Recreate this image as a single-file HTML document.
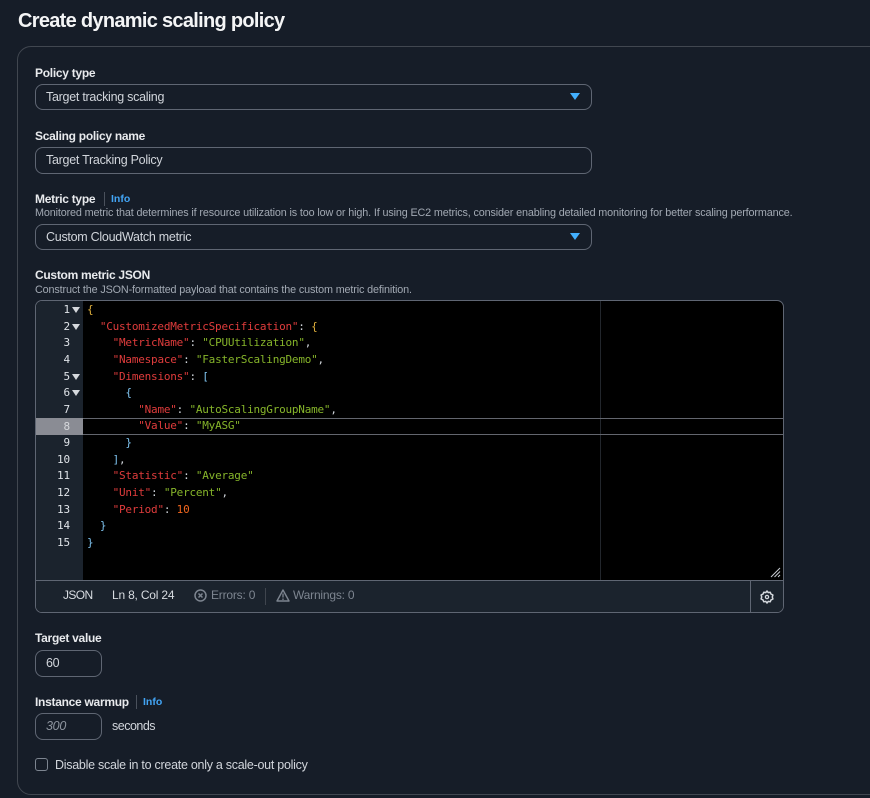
<!DOCTYPE html>
<html><head><meta charset="utf-8">
<style>
html,body{margin:0;padding:0;background:#161d28;}
body{width:870px;height:798px;position:relative;overflow:hidden;font-family:"Liberation Sans",sans-serif;color:#d1d5db;font-size:12.5px;letter-spacing:-.27px}
.a{position:absolute;white-space:nowrap}
.lbl{font-weight:700;font-size:12px;color:#e8eaed;line-height:16px;letter-spacing:-.28px}
.box{position:absolute;box-sizing:border-box;border:1px solid #5f6673;border-radius:8px;height:26px;line-height:24px;padding-left:10px;color:#d1d5db;font-size:12.5px}
.desc{font-size:10.8px;color:#a2a9b3;line-height:14px;letter-spacing:-.135px}
.info{font-weight:700;font-size:10.5px;color:#42a5f5;line-height:16px;letter-spacing:0}
.sep{position:absolute;width:1px;height:14px;background:#4a515c}
.tri{position:absolute;width:0;height:0;border-left:5px solid transparent;border-right:5px solid transparent;border-top:7px solid #42b0ff}
.code{position:absolute;left:87px;font-family:"DejaVu Sans Mono","Liberation Mono",monospace;font-size:11px;line-height:16.64px;white-space:pre;color:#cfd4da;letter-spacing:-.22px}
.k{color:#e03c3c}.s{color:#86b52a}.n{color:#f0661e}.y{color:#e0b03c}.b{color:#7fc4f0}
.ln{position:absolute;left:35px;width:35px;text-align:right;font-family:"DejaVu Sans Mono","Liberation Mono",monospace;font-size:11px;line-height:16.64px;color:#dfe3e8;letter-spacing:-.1px}
.fold{position:absolute;left:72px;width:0;height:0;border-left:4.5px solid transparent;border-right:4.5px solid transparent;border-top:6px solid #d5d8dc}
.st{font-size:12px;line-height:16px;letter-spacing:-.2px}
</style></head><body>
<div class="a" style="left:18px;top:7px;font-size:20px;font-weight:700;color:#f4f5f6;line-height:28px;letter-spacing:-.7px">Create dynamic scaling policy</div>
<div style="position:absolute;left:17px;top:46px;width:900px;height:749px;box-sizing:border-box;border:1px solid #414750;border-radius:14px"></div>

<div class="a lbl" style="left:35px;top:65px">Policy type</div>
<div class="box" style="left:35px;top:84px;width:557px">Target tracking scaling</div>
<div class="tri" style="left:570px;top:93px"></div>

<div class="a lbl" style="left:35px;top:128px">Scaling policy name</div>
<div class="box" style="left:35px;top:147px;width:557px;height:27px;line-height:25px">Target Tracking Policy</div>

<div class="a lbl" style="left:35px;top:191px">Metric type</div>
<div class="sep" style="left:104px;top:192px"></div>
<div class="a info" style="left:111px;top:191px">Info</div>
<div class="a desc" style="left:35px;top:206px">Monitored metric that determines if resource utilization is too low or high. If using EC2 metrics, consider enabling detailed monitoring for better scaling performance.</div>
<div class="box" style="left:35px;top:224px;width:557px">Custom CloudWatch metric</div>
<div class="tri" style="left:570px;top:233px"></div>

<div class="a lbl" style="left:35px;top:267px">Custom metric JSON</div>
<div class="a desc" style="left:35px;top:283px">Construct the JSON-formatted payload that contains the custom metric definition.</div>

<!-- editor -->
<div style="position:absolute;left:35px;top:300px;width:749px;height:313px;box-sizing:border-box;border:1px solid #5f6673;border-radius:7px;overflow:hidden;background:#000">
  <div style="position:absolute;left:0;top:0;width:47px;height:279px;background:#1b232d"></div>
  <div style="position:absolute;left:564px;top:0;width:1px;height:279px;background:#22262c"></div>
  <div style="position:absolute;left:0;top:117px;width:47px;height:17px;background:#8a8c94"></div>
  <div style="position:absolute;left:47px;top:117px;right:0;height:17px;box-sizing:border-box;border-top:1px solid #63666e;border-bottom:1px solid #63666e"></div>
  <div style="position:absolute;left:0;top:279px;right:0;bottom:0;background:#1b232d;border-top:1px solid #5f6673"></div>
  <div style="position:absolute;left:714px;top:279px;width:1px;bottom:0;background:#5f6673"></div>
</div>
<div class="ln" style="top:302px">1</div>
<div class="ln" style="top:318.6px">2</div>
<div class="ln" style="top:335.3px">3</div>
<div class="ln" style="top:351.9px">4</div>
<div class="ln" style="top:368.6px">5</div>
<div class="ln" style="top:385.2px">6</div>
<div class="ln" style="top:401.8px">7</div>
<div class="ln" style="top:418.5px;color:#d5d7db">8</div>
<div class="ln" style="top:435.1px">9</div>
<div class="ln" style="top:451.8px">10</div>
<div class="ln" style="top:468.4px">11</div>
<div class="ln" style="top:485px">12</div>
<div class="ln" style="top:501.7px">13</div>
<div class="ln" style="top:518.3px">14</div>
<div class="ln" style="top:535px">15</div>
<div class="fold" style="top:307px"></div>
<div class="fold" style="top:324px"></div>
<div class="fold" style="top:374px"></div>
<div class="fold" style="top:390px"></div>
<div class="code" style="top:302px"><span class="y">{</span>
  <span class="k">"CustomizedMetricSpecification"</span>: <span class="y">{</span>
    <span class="k">"MetricName"</span>: <span class="s">"CPUUtilization"</span>,
    <span class="k">"Namespace"</span>: <span class="s">"FasterScalingDemo"</span>,
    <span class="k">"Dimensions"</span>: <span class="b">[</span>
      <span class="b">{</span>
        <span class="k">"Name"</span>: <span class="s">"AutoScalingGroupName"</span>,
        <span class="k">"Value"</span>: <span class="s">"MyASG"</span>
      <span class="b">}</span>
    <span class="b">]</span>,
    <span class="k">"Statistic"</span>: <span class="s">"Average"</span>
    <span class="k">"Unit"</span>: <span class="s">"Percent"</span>,
    <span class="k">"Period"</span>: <span class="n">10</span>
  <span class="b">}</span>
<span class="b">}</span></div>
<svg style="position:absolute;left:770px;top:567px" width="11" height="11" viewBox="0 0 11 11"><path d="M1 10L10 1M4.5 10L10 4.5M8 10L10 8" stroke="#c8ccd2" stroke-width="1" fill="none"/></svg>

<div class="a st" style="left:63px;top:587px;color:#d8dce1;letter-spacing:-.6px">JSON</div>
<div class="a st" style="left:112px;top:587px;color:#d8dce1">Ln 8, Col 24</div>
<svg style="position:absolute;left:194px;top:589px" width="13" height="13" viewBox="0 0 13 13"><circle cx="6.5" cy="6.5" r="5.5" stroke="#7d8590" stroke-width="1.5" fill="none"/><path d="M4.5 4.5L8.5 8.5M8.5 4.5L4.5 8.5" stroke="#7d8590" stroke-width="1.5"/></svg>
<div class="a st" style="left:211px;top:587px;color:#7d8590">Errors: 0</div>
<div style="position:absolute;left:265px;top:588px;width:1px;height:17px;background:#3f454e"></div>
<svg style="position:absolute;left:276px;top:589px" width="14" height="13" viewBox="0 0 14 13"><path d="M7 1L13 12H1Z" stroke="#7d8590" stroke-width="1.4" fill="none" stroke-linejoin="round"/><path d="M7 4.5V8.5M7 9.5V11" stroke="#7d8590" stroke-width="1.3"/></svg>
<div class="a st" style="left:293px;top:587px;color:#7d8590">Warnings: 0</div>
<svg style="position:absolute;left:760px;top:590px" width="14" height="14" viewBox="0 0 14 14"><path d="M7 1L8.2 2.6L10.2 2.2L11 4.1L12.9 5L12.3 7L12.9 9L11 9.9L10.2 11.8L8.2 11.4L7 13L5.8 11.4L3.8 11.8L3 9.9L1.1 9L1.7 7L1.1 5L3 4.1L3.8 2.2L5.8 2.6Z" stroke="#d5d9de" stroke-width="1.5" fill="none" stroke-linejoin="round"/><circle cx="7" cy="7" r="1.6" stroke="#d5d9de" stroke-width="1.3" fill="none"/></svg>

<div class="a lbl" style="left:35px;top:630px">Target value</div>
<div class="box" style="left:35px;top:650px;width:67px;height:27px;line-height:25px">60</div>

<div class="a lbl" style="left:35px;top:694px">Instance warmup</div>
<div class="sep" style="left:136px;top:695px"></div>
<div class="a info" style="left:143px;top:694px">Info</div>
<div class="box" style="left:35px;top:713px;width:67px;height:27px;line-height:25px;font-style:italic;color:#8d949e">300</div>
<div class="a" style="left:112px;top:718px;line-height:16px;letter-spacing:-.5px">seconds</div>

<div style="position:absolute;left:35px;top:758px;width:13px;height:13px;box-sizing:border-box;border:1.5px solid #7d8590;border-radius:3px"></div>
<div class="a" style="left:55px;top:757px;line-height:16px">Disable scale in to create only a scale-out policy</div>
</body></html>
